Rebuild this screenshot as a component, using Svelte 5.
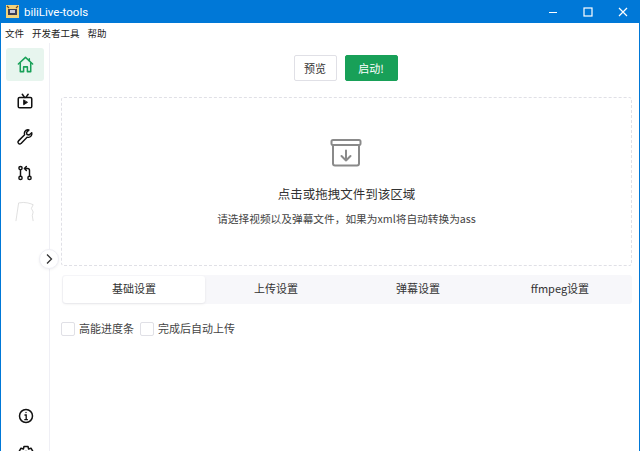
<script>
  const tabs = ['基础设置', '上传设置', '弹幕设置', 'ffmpeg设置'];
  const menus = ['文件', '开发者工具', '帮助'];
</script>

<div class="win">
  <header class="title">
    <div class="logo">
      <svg width="13" height="13" viewBox="0 0 13 13"><rect width="13" height="13" fill="#f2d27a"/><rect x="2" y="4" width="9" height="6" fill="#3d3d55"/><rect x="4" y="5" width="5" height="3" fill="#c9c9d8"/><path d="M1 1l2 2M12 1l-2 2" stroke="#6b4a2a" stroke-width="1.2"/></svg>
    </div>
    <span class="name">biliLive-tools</span>
    <div class="controls">
      <svg width="10" height="10" viewBox="0 0 10 10"><path d="M1 5.500h8" stroke="#fff" stroke-width="1"/></svg>
      <svg width="10" height="10" viewBox="0 0 10 10"><rect x="1" y="1" width="8" height="8" fill="none" stroke="#fff" stroke-width="1.2"/></svg>
      <svg width="10" height="10" viewBox="0 0 10 10"><path d="M1 1l8 8M9 1l-8 8" stroke="#fff" stroke-width="1.2"/></svg>
    </div>
  </header>
  <nav class="menu">
    {#each menus as m}<span>{m}</span>{/each}
  </nav>
  <div class="body">
    <aside class="side">
      <div class="item active">
        <svg width="19" height="19" viewBox="0 0 20 20" fill="none" stroke="#18a058" stroke-width="1.6" stroke-linejoin="round" stroke-linecap="round"><path d="M2.500 9.500L10 2.500l7.500 7"/><path d="M4.500 8.500V17.500H8V12.500H12V17.500H15.500V8.500"/><path d="M14 4V6"/></svg>
      </div>
      <div class="item">
        <svg width="18" height="18" viewBox="0 0 20 20" fill="none" stroke="#111" stroke-width="1.7" stroke-linecap="round" stroke-linejoin="round"><rect x="2.500" y="6" width="15" height="11.500" rx="1.500"/><path d="M7 2.500L9.500 6M13.500 2.500L11 6"/><path d="M8.500 9.200v5l4-2.500z" fill="#111" stroke-width="1"/></svg>
      </div>
      <div class="item">
        <svg width="18" height="18" viewBox="0 0 20 20" fill="none" stroke="#111" stroke-width="1.600" stroke-linejoin="round"><path d="M17.500 5.200l-3 2.600-2.300-.6-.6-2.300 2.800-2.800c-2.400-.7-5 .9-5.100 3.500 0 .8.100 1.400.3 1.900L2.800 14.300c-1 1-.8 2 0 2.800s1.900 1 2.800 0l6.700-6.900c.6.200 1.200.3 1.900.2 2.500-.3 3.900-2.800 3.300-5.200z"/></svg>
      </div>
      <div class="item">
        <svg width="18" height="18" viewBox="0 0 20 20" fill="none" stroke="#111" stroke-width="1.600" stroke-linecap="round" stroke-linejoin="round"><circle cx="5" cy="4.500" r="1.800"/><circle cx="5" cy="15.500" r="1.800"/><circle cx="15" cy="15.500" r="1.800"/><path d="M5 6.500v7M15 13.500V7q0-2-2-2H9.500M11.500 2.800L9.300 5l2.200 2.200"/></svg>
      </div>
      <div class="sketch">
        <svg width="20" height="24" viewBox="0 0 22 24" fill="none" stroke="#d4d4d4" stroke-width="0.8"><path d="M1 22L4 2Q10 1 14 2T20 4L18 8 20 12 19 16 20 22"/></svg>
      </div>
      <div class="foot">
        <svg width="18" height="18" viewBox="0 0 18 18" fill="none" stroke="#111" stroke-width="1.500"><circle cx="9" cy="9" r="6.500"/><path d="M7.500 8h1.700v4.500M7.300 12.700h3.600" stroke-width="1.300"/><circle cx="9" cy="5.500" r="0.700" fill="#111" stroke="none"/></svg>
        <svg width="20" height="20" viewBox="0 0 20 20" fill="none" stroke="#111" stroke-width="1.500" stroke-linejoin="round"><path d="M8 2.500h4l.6 2.500 2.400-.8 2 3.400-1.900 1.700v1.400l1.900 1.700-2 3.400-2.400-.8-.6 2.500H8l-.6-2.500-2.400.8-2-3.400 1.900-1.700V9.300L3 7.600l2-3.400 2.400.8z"/><circle cx="10" cy="10" r="2.500"/></svg>
      </div>
      <button class="collapse" aria-label="collapse">
        <svg width="10" height="12" viewBox="0 0 10 12" fill="none" stroke="#333" stroke-width="1.300"><path d="M3 1.500L7.500 6 3 10.500"/></svg>
      </button>
    </aside>
    <main class="main">
      <div class="actions">
        <button class="btn">预览</button>
        <button class="btn primary">启动!</button>
      </div>
      <section class="drop">
        <svg class="arc" width="34" height="34" viewBox="0 0 34 34" fill="none" stroke="#8a8a8a" stroke-width="2" stroke-linejoin="round" stroke-linecap="round"><rect x="2.500" y="4" width="29" height="5" rx="1.500"/><path d="M4 9v18.500q0 2 2 2h22q2 0 2-2V9"/><path d="M17 14.500v10M12.500 20l4.500 4.500 4.500-4.500"/></svg>
        <div class="t1">点击或拖拽文件到该区域</div>
        <div class="t2">请选择视频以及弹幕文件，如果为xml将自动转换为ass</div>
      </section>
      <div class="tabs">
        {#each tabs as t, i}
          <div class="tab" class:on={i === 0}>{t}</div>
        {/each}
      </div>
      <div class="checks">
        <label class="check"><i></i>高能进度条</label>
        <label class="check"><i></i>完成后自动上传</label>
      </div>
    </main>
  </div>
</div>

<style>
  :global(body) { margin: 0; overflow: hidden; background: #fff; }
  .win {
    width: 640px; height: 451px; box-sizing: border-box; overflow: hidden;
    display: flex; flex-direction: column;
    border-left: 1px solid #0078d7; border-right: 1px solid #0078d7;
    font-family: "Noto Sans CJK SC", "Noto Sans", sans-serif; color: #333;
  }
  .title {
    height: 23px; flex: none; background: #0078d7; color: #fff;
    display: flex; align-items: center; padding-left: 6px; margin: 0 -1px;
    font-family: "Roboto", "Noto Sans", sans-serif; font-size: 11.500px;
  }
  .logo { width: 13px; height: 13px; display: flex; margin-right: 5px; }
  .controls { margin-left: auto; display: flex; align-items: center; gap: 25px; padding-right: 12px; }
  .controls svg { display: block; }
  .menu {
    height: 20px; flex: none; display: flex; align-items: center; gap: 8px; padding-left: 4px;
    font-size: 9.500px; color: #222;
  }
  .body { flex: 1; min-height: 0; display: flex; }
  .side {
    width: 49px; flex: none; box-sizing: border-box; position: relative;
    border-right: 1px solid #efeff5; padding: 5px 5px 0 5px;
    display: flex; flex-direction: column; align-items: center;
  }
  .item { width: 38px; height: 33px; flex: none; margin-bottom: 3px; display: flex; align-items: center; justify-content: center; border-radius: 3px; }
  .active { background: #e7f5ee; }
  .sketch { margin-top: 8px; height: 24px; margin-left: -1px; }
  .foot { position: absolute; left: 15px; top: 364px; display: flex; flex-direction: column; align-items: center; gap: 19px; }
  .collapse {
    position: absolute; left: 38px; top: 206px; width: 20px; height: 20px; padding: 0;
    border-radius: 50%; background: #fff; border: 1px solid #efeff5; box-shadow: 0 1px 3px rgba(0,0,0,.06);
    display: flex; align-items: center; justify-content: center; z-index: 2;
  }
  .main { flex: 1; min-width: 0; padding: 12px 7px 0 11px; display: flex; flex-direction: column; }
  .actions { display: flex; justify-content: center; gap: 8px; height: 26px; margin-bottom: 16px; padding-right: 2px; }
  .btn {
    width: 43px; height: 26px; padding: 0; box-sizing: border-box;
    border: 1px solid #e0e0e6; border-radius: 2px; background: #fff; color: #333;
    font: 11px "Noto Sans CJK SC", sans-serif;
  }
  .primary { width: 53px; background: #18a058; border-color: #18a058; color: #fff; }
  .drop {
    height: 169px; flex: none; box-sizing: border-box; border: 1px dashed #e0e0e6; border-radius: 3px;
    display: flex; flex-direction: column; align-items: center;
  }
  .arc { margin-top: 38px; margin-right: 1px; }
  .t1 { margin-top: 15px; font-size: 12.500px; line-height: 18px; color: #333; }
  .t2 { margin-top: 8px; font-size: 10.700px; line-height: 16px; color: #444; }
  .tabs { margin-top: 9px; height: 29px; flex: none; background: #f7f7fa; border-radius: 3px; display: grid; grid-template-columns: repeat(4, 1fr); padding: 1px; box-sizing: border-box; margin-left: 1px; }
  .tab { display: flex; align-items: center; justify-content: center; font-size: 11px; line-height: 15px; padding-bottom: 3px; box-sizing: border-box; color: #333; border-radius: 3px; }
  .on { background: #fff; box-shadow: 0 1px 3px rgba(0,0,0,.08); }
  .checks { display: flex; gap: 6px; margin-top: 17px; }
  .check { display: flex; align-items: center; font-size: 11px; line-height: 15px; color: #444; }
  .check i { width: 12px; height: 12px; border: 1px solid #e0e0e6; border-radius: 2px; margin-right: 4px; display: block; }
</style>
